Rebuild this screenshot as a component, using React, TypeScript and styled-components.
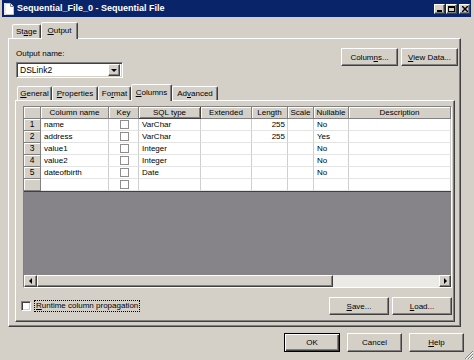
import React from 'react';
import styled, { createGlobalStyle, css } from 'styled-components';

const FACE = '#d4d0c8';
const SHADOW = '#808080';
const DARK = '#404040';
const FONT = '"Liberation Sans", Arial, sans-serif';

const COLS = [17, 68, 30, 62, 51, 36, 26, 35, 102];
const TEMPLATE = COLS.map(c => `${c}px`).join(' ');

const GlobalStyle = createGlobalStyle`
    html, body { margin: 0; padding: 0; background: ${FACE}; }
    body { font-family: ${FONT}; font-size: 8px; color: #000; }
    * { box-sizing: border-box; }
`;

const raised = css`
    border: 1px solid;
    border-color: #fff ${DARK} ${DARK} #fff;
    box-shadow: inset -1px -1px 0 ${SHADOW};
`;

const Window = styled.div`
    position: relative;
    width: 474px;
    height: 360px;
    background: ${FACE};
    display: flex;
    flex-direction: column;
    overflow: hidden;
`;

const TitleBar = styled.div`
    height: 17px;
    margin: 0 3px 0 2px;
    background: #0a246a;
    display: flex;
    align-items: center;
    padding: 0 1px 0 2px;
    gap: 3px;
`;

const TitleText = styled.div`
    flex: 1;
    color: #fff;
    font-weight: bold;
    font-size: 9px;
    line-height: 17px;
    white-space: nowrap;
`;

const CaptionButtons = styled.div`
    display: flex;
    gap: 1px;
`;

const CaptionButton = styled.div<{ $gap?: boolean }>`
    ${raised};
    width: 11px;
    height: 10px;
    background: ${FACE};
    margin-left: ${p => (p.$gap ? 1 : 0)}px;
    display: flex;
    align-items: center;
    justify-content: center;
`;

const Content = styled.div`
    display: flex;
    flex-direction: column;
    padding: 5px 13px 0 8px;
`;

const TabStrip = styled.div<{ $indent: number }>`
    display: flex;
    align-items: flex-end;
    height: 16px;
    padding-left: ${p => p.$indent}px;
`;

const Tab = styled.div<{ $active?: boolean; $w: number }>`
    position: relative;
    z-index: ${p => (p.$active ? 2 : 0)};
    width: ${p => p.$w}px;
    height: ${p => (p.$active ? 17 : 14)}px;
    margin-bottom: ${p => (p.$active ? -1 : 0)}px;
    background: ${FACE};
    border: 1px solid;
    border-bottom: none;
    border-color: #fff ${DARK} transparent #fff;
    border-radius: 2px 2px 0 0;
    box-shadow: inset -1px 0 0 ${SHADOW};
    display: flex;
    align-items: center;
    justify-content: center;
    padding-bottom: ${p => (p.$active ? 2 : 0)}px;
    white-space: nowrap;
`;

const Panel = styled.div<{ $h: number }>`
    ${raised};
    position: relative;
    z-index: 1;
    height: ${p => p.$h}px;
    display: flex;
    flex-direction: column;
`;

const OuterPanel = styled(Panel)`
    padding: 9px 2px 0 6px;
`;

const InnerPanel = styled(Panel)`
    margin-right: 3px;
    padding: 5px 2px 0 7px;
`;

const TopRow = styled.div`
    display: flex;
    justify-content: space-between;
    align-items: flex-start;
    height: 30px;
    margin-bottom: 6px;
`;

const Field = styled.div`
    display: flex;
    flex-direction: column;
    gap: 3px;
    margin: 1px 0 0 1px;
`;

const Label = styled.div`
    line-height: 10px;
`;

const Combo = styled.div`
    width: 107px;
    height: 16px;
    background: #fff;
    border: 1px solid;
    border-color: ${SHADOW} #fff #fff ${SHADOW};
    box-shadow: inset 1px 1px 0 ${DARK}, inset -1px -1px 0 ${FACE};
    display: flex;
    align-items: center;
    padding: 0 2px 0 3px;
`;

const ComboText = styled.div`
    flex: 1;
    font-size: 8.5px;
`;

const ComboArrow = styled.div`
    ${raised};
    width: 12px;
    height: 12px;
    background: ${FACE};
    display: flex;
    align-items: center;
    justify-content: center;
`;

const ButtonGroup = styled.div<{ $gap: number }>`
    display: flex;
    gap: ${p => p.$gap}px;
`;

const Button = styled.div<{ $w: number; $h?: number; $default?: boolean }>`
    width: ${p => p.$w}px;
    height: ${p => p.$h ?? 18}px;
    background: ${FACE};
    display: flex;
    align-items: center;
    justify-content: center;
    white-space: nowrap;
    ${p => (p.$default
        ? css`
            border: 1px solid #000;
            box-shadow: inset 1px 1px 0 #fff, inset -1px -1px 0 ${DARK}, inset -2px -2px 0 ${SHADOW};
        `
        : raised)};
`;

const GridFrame = styled.div`
    width: 429px;
    height: 182px;
    border: 1px solid;
    border-color: ${SHADOW} #fff #fff ${SHADOW};
    display: flex;
    flex-direction: column;
    background: #868489;
`;

const GridRow = styled.div`
    display: grid;
    grid-template-columns: ${TEMPLATE};
    height: 12px;
    background: #fff;
`;

const HeaderCell = styled.div<{ $focus?: boolean }>`
    background: ${FACE};
    border-right: 1px solid ${SHADOW};
    border-bottom: 1px solid ${SHADOW};
    box-shadow: inset 1px 1px 0 #fff;
    display: flex;
    align-items: center;
    justify-content: center;
    line-height: 11px;
    white-space: nowrap;
    overflow: hidden;
    ${p => p.$focus && css`
        border-right-color: ${DARK};
        border-bottom-color: ${DARK};
        box-shadow: inset 1px 1px 0 #fff, inset -1px -1px 0 ${SHADOW};
    `}
`;

const RowNumber = styled(HeaderCell)`
    font-size: 8.5px;
`;

const Cell = styled.div<{ $align?: 'left' | 'right' | 'center' }>`
    border-right: 1px solid #cfcfcf;
    border-bottom: 1px solid #e4e4e4;
    display: flex;
    align-items: center;
    justify-content: ${p => (p.$align === 'right' ? 'flex-end' : p.$align === 'center' ? 'center' : 'flex-start')};
    padding: 0 2px 0 3px;
    line-height: 11px;
    white-space: nowrap;
    overflow: hidden;
`;

const KeyBox = styled.div`
    width: 9px;
    height: 9px;
    border: 1px solid #8e8e8e;
    background: #fff;
`;

const GridEnd = styled.div`
    height: 1px;
    background: ${DARK};
`;

const GridFill = styled.div`
    flex: 1;
`;

const ScrollBar = styled.div`
    height: 12px;
    display: flex;
    background: #eceae6;
`;

const ScrollButton = styled.div<{ $w: number }>`
    ${raised};
    width: ${p => p.$w}px;
    background: ${FACE};
    display: flex;
    align-items: center;
    justify-content: center;
`;

const ScrollThumb = styled.div`
    ${raised};
    width: 296px;
    background: ${FACE};
`;

const BottomRow = styled.div`
    display: flex;
    align-items: center;
    justify-content: space-between;
    height: 18px;
    margin: 9px 0 0 -2px;
`;

const CheckRow = styled.div`
    display: flex;
    align-items: center;
    gap: 3px;
`;

const CheckBox = styled.div`
    width: 10px;
    height: 10px;
    background: #fff;
    border: 1px solid;
    border-color: ${SHADOW} #fff #fff ${SHADOW};
    box-shadow: inset 1px 1px 0 ${DARK}, inset -1px -1px 0 ${FACE};
`;

const FocusLabel = styled.div`
    border: 1px dotted #000;
    padding: 0 1px;
    line-height: 10px;
`;

const DialogButtons = styled.div`
    display: flex;
    justify-content: flex-end;
    gap: 7px;
    margin-top: 6px;
    padding-right: 10px;
`;

const Grip = styled.svg`
    position: absolute;
    right: 0;
    bottom: 0;
`;

const Arrow = ({ dir }: { dir: 'down' | 'left' | 'right' }) => {
    const pts = dir === 'down' ? '0,0 6,0 3,3' : dir === 'left' ? '3,0 3,6 0,3' : '0,0 0,6 3,3';
    const w = dir === 'down' ? 6 : 3;
    const h = dir === 'down' ? 3 : 6;
    return (
        <svg width={w} height={h} viewBox={`0 0 ${w} ${h}`}>
            <polygon points={pts} fill="#000" />
        </svg>
    );
};

interface ColumnRow {
    name: string;
    sqlType: string;
    length: string;
    nullable: string;
}

const rows: ColumnRow[] = [
    { name: 'name', sqlType: 'VarChar', length: '255', nullable: 'No' },
    { name: 'address', sqlType: 'VarChar', length: '255', nullable: 'Yes' },
    { name: 'value1', sqlType: 'Integer', length: '', nullable: 'No' },
    { name: 'value2', sqlType: 'Integer', length: '', nullable: 'No' },
    { name: 'dateofbirth', sqlType: 'Date', length: '', nullable: 'No' },
];

const headers = ['Column name', 'Key', 'SQL type', 'Extended', 'Length', 'Scale', 'Nullable', 'Description'];

const App: React.FC = () => {
    return (
        <Window>
            <GlobalStyle />
            <TitleBar>
                <svg width="10" height="12" viewBox="0 0 10 12">
                    <path d="M0.5 0.5 H6.5 L9.5 3.5 V11.5 H0.5 Z" fill="#fff" stroke="#c8c8c8" />
                    <path d="M6.5 0.5 V3.5 H9.5" fill="none" stroke="#808080" />
                    <rect x="0" y="0" width="2" height="12" fill="#e8e8e8" />
                </svg>
                <TitleText>Sequential_File_0 - Sequential File</TitleText>
                <CaptionButtons>
                    <CaptionButton>
                        <svg width="6" height="6" viewBox="0 0 6 6"><rect x="0" y="4" width="5" height="2" fill="#000" /></svg>
                    </CaptionButton>
                    <CaptionButton>
                        <svg width="7" height="6" viewBox="0 0 7 6"><rect x="0.5" y="0.5" width="6" height="5" fill="none" stroke="#000" /><rect x="0" y="0" width="7" height="2" fill="#000" /></svg>
                    </CaptionButton>
                    <CaptionButton $gap>
                        <svg width="6" height="6" viewBox="0 0 6 6"><path d="M0 0 L6 6 M6 0 L0 6" stroke="#000" strokeWidth="1.5" /></svg>
                    </CaptionButton>
                </CaptionButtons>
            </TitleBar>

            <Content>
                <TabStrip $indent={4}>
                    <Tab $w={29}>St<u>a</u>ge</Tab>
                    <Tab $w={37} $active><u>O</u>utput</Tab>
                </TabStrip>
                <OuterPanel $h={289}>
                    <TopRow>
                        <Field>
                            <Label>Output name:</Label>
                            <Combo>
                                <ComboText>DSLink2</ComboText>
                                <ComboArrow><Arrow dir="down" /></ComboArrow>
                            </Combo>
                        </Field>
                        <ButtonGroup $gap={3}>
                            <Button $w={57}>Colum<u>n</u>s...</Button>
                            <Button $w={57}><u>V</u>iew Data...</Button>
                        </ButtonGroup>
                    </TopRow>

                    <TabStrip $indent={2}>
                        <Tab $w={35}><u>G</u>eneral</Tab>
                        <Tab $w={46}><u>P</u>roperties</Tab>
                        <Tab $w={33}>Fo<u>r</u>mat</Tab>
                        <Tab $w={41} $active><u>C</u>olumns</Tab>
                        <Tab $w={46}>Ad<u>v</u>anced</Tab>
                    </TabStrip>
                    <InnerPanel $h={222}>
                        <GridFrame>
                            <GridRow>
                                <HeaderCell />
                                {headers.map(h => (
                                    <HeaderCell key={h} $focus={h === 'SQL type'}>{h}</HeaderCell>
                                ))}
                            </GridRow>
                            {rows.map((r, i) => (
                                <GridRow key={r.name}>
                                    <RowNumber>{i + 1}</RowNumber>
                                    <Cell>{r.name}</Cell>
                                    <Cell $align="center"><KeyBox /></Cell>
                                    <Cell>{r.sqlType}</Cell>
                                    <Cell />
                                    <Cell $align="right">{r.length}</Cell>
                                    <Cell />
                                    <Cell>{r.nullable}</Cell>
                                    <Cell />
                                </GridRow>
                            ))}
                            <GridRow>
                                <RowNumber />
                                <Cell />
                                <Cell $align="center"><KeyBox /></Cell>
                                <Cell />
                                <Cell />
                                <Cell />
                                <Cell />
                                <Cell />
                                <Cell />
                            </GridRow>
                            <GridEnd />
                            <GridFill />
                            <ScrollBar>
                                <ScrollButton $w={13}><Arrow dir="left" /></ScrollButton>
                                <ScrollThumb />
                                <GridFill />
                                <ScrollButton $w={12}><Arrow dir="right" /></ScrollButton>
                            </ScrollBar>
                        </GridFrame>

                        <BottomRow>
                            <CheckRow>
                                <CheckBox />
                                <FocusLabel><u>R</u>untime column propagation</FocusLabel>
                            </CheckRow>
                            <ButtonGroup $gap={3}>
                                <Button $w={60}><u>S</u>ave...</Button>
                                <Button $w={60}><u>L</u>oad...</Button>
                            </ButtonGroup>
                        </BottomRow>
                    </InnerPanel>
                </OuterPanel>
            </Content>

            <DialogButtons>
                <Button $w={56} $h={19} $default>OK</Button>
                <Button $w={55} $h={19}>Cancel</Button>
                <Button $w={55} $h={19}><u>H</u>elp</Button>
            </DialogButtons>

            <Grip width="11" height="11" viewBox="0 0 11 11">
                <path d="M10 2 L2 10 M10 5 L5 10 M10 8 L8 10" stroke="#808080" strokeWidth="1" />
                <path d="M10 3 L3 10 M10 6 L6 10 M10 9 L9 10" stroke="#fff" strokeWidth="1" />
            </Grip>
        </Window>
    );
};

export default App;
